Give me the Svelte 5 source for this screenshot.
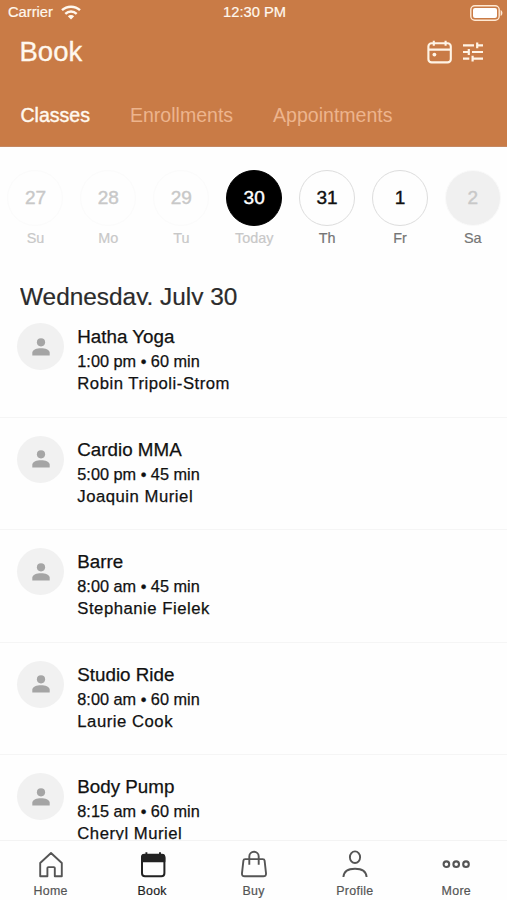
<script>
  const tabs = ['Classes', 'Enrollments', 'Appointments'];
  const days = [
    { n: 27, d: 'Su', kind: 'past' },
    { n: 28, d: 'Mo', kind: 'past' },
    { n: 29, d: 'Tu', kind: 'past' },
    { n: 30, d: 'Today', kind: 'today' },
    { n: 31, d: 'Th', kind: 'open' },
    { n: 1, d: 'Fr', kind: 'open' },
    { n: 2, d: 'Sa', kind: 'closed' },
  ];
  const classes = [
    { name: 'Hatha Yoga', time: '1:00 pm • 60 min', who: 'Robin Tripoli-Strom' },
    { name: 'Cardio MMA', time: '5:00 pm • 45 min', who: 'Joaquin Muriel' },
    { name: 'Barre', time: '8:00 am • 45 min', who: 'Stephanie Fielek' },
    { name: 'Studio Ride', time: '8:00 am • 60 min', who: 'Laurie Cook' },
    { name: 'Body Pump', time: '8:15 am • 60 min', who: 'Cheryl Muriel' },
  ];
  const nav = ['Home', 'Book', 'Buy', 'Profile', 'More'];
</script>

<div class="app">
  <header>
    <div class="status">
      <div class="carrier">
        <span>Carrier</span>
        <svg width="20" height="15" viewBox="0 0 20 15" fill="none" stroke="#fff8ee" stroke-width="2.4">
          <path d="M1 5.2C6 .5 14 .5 19 5.2M4.3 8.8c3.3-3 8.1-3 11.4 0" />
          <path d="M10 14.4 6.8 11.2c1.8-1.6 4.6-1.6 6.4 0z" fill="#fff8ee" stroke="none" />
        </svg>
      </div>
      <span class="clock">12:30 PM</span>
      <svg class="battery" width="33" height="16" viewBox="0 0 33 16">
        <rect x=".8" y=".8" width="28.4" height="14.4" rx="4" fill="none" stroke="#ffe9d3" stroke-width="1.4" />
        <rect x="3" y="3" width="24" height="10" rx="2" fill="#fff" />
        <path d="M30.6 5c2.4.8 2.4 5.2 0 6z" fill="#ffe9d3" />
      </svg>
    </div>
    <div class="title">
      <h1>Book</h1>
      <svg class="cal" width="26" height="24" viewBox="0 0 26 24" fill="none" stroke="#fff4e5" stroke-width="2.1">
        <rect x="1.4" y="3.2" width="22.4" height="19.2" rx="3.2" />
        <path d="M1.4 9.6h22.4M6.8 .8v5M18.6 .8v5" />
        <circle cx="7.4" cy="14.6" r="1.9" fill="#fff4e5" stroke="none" />
      </svg>
      <svg class="tune" width="20" height="20" viewBox="0 0 20 20" fill="none" stroke="#fff4e5" stroke-width="2.2">
        <path d="M0 3.4h11M14.2.5v5.8M14.2 3.4H20M0 10h5.8M5.8 7v6M9 10h11M0 16.6h6.3M9.6 13.7v5.8M9.6 16.6H20" />
      </svg>
    </div>
    <nav class="tabs">
      {#each tabs as t, i}<span class:on={i === 0}>{t}</span>{/each}
    </nav>
  </header>

  <section class="days">
    {#each days as day}
      <div class="day {day.kind}">
        <b>{day.n}</b>
        <span>{day.d}</span>
      </div>
    {/each}
  </section>

  <h2>Wednesday, July 30</h2>

  <main>
    {#each classes as c}
      <article>
        <div class="avatar">
          <svg width="18" height="18" viewBox="0 0 18 18" fill="#a5a5a5">
            <circle cx="9" cy="4.3" r="4.1" />
            <path d="M.3 17.4v-2.6C.3 11.7 4.9 10.3 9 10.3s8.7 1.4 8.7 4.5v2.6z" />
          </svg>
        </div>
        <div class="info">
          <div class="name">{c.name}</div>
          <div class="time">{c.time}</div>
          <div class="who">{c.who}</div>
        </div>
      </article>
    {/each}
  </main>

  <footer>
    {#each nav as item}
      <div class="item" class:active={item === 'Book'}>
        <svg width="30" height="30" viewBox="0 0 30 30" fill="none" stroke="currentColor" stroke-width="1.9" stroke-linejoin="round">
          {#if item === 'Home'}
            <path d="M4.2 26.3V13L15 3l10.8 10v13.3h-7V18.1a1 1 0 0 0-1-1h-5.4a1 1 0 0 0-1 1v8.2z" />
          {:else if item === 'Book'}
            <rect x="5" y="5" width="22.4" height="21.2" rx="3" stroke-width="2" />
            <path d="M5 11.4V7.3Q5 4.8 7.5 4.8H25q2.4 0 2.4 2.5v4.1zM9.4 2.2V6M23 2.2V6" fill="currentColor" />
          {:else if item === 'Buy'}
            <path d="M6.2 9.1h17.6q1.6 0 1.8 1.6l1.4 12.5q.3 3.1-2.7 3.1H5.7q-3 0-2.7-3.1l1.4-12.5q.2-1.6 1.8-1.6zM10.3 14.8V6.4a4.7 4.7 0 0 1 9.4 0v8.4" />
          {:else if item === 'Profile'}
            <ellipse cx="15" cy="7.2" rx="5.1" ry="5.8" />
            <path d="M3.4 27C3.8 21.3 8.6 18.7 15 18.7s11.2 2.6 11.6 8.3" />
          {:else}
            <g stroke-width="2.1"><circle cx="5.4" cy="14.2" r="2.8" /><circle cx="15.2" cy="14.2" r="2.8" /><circle cx="25" cy="14.2" r="2.8" /></g>
          {/if}
        </svg>
        <span>{item}</span>
      </div>
    {/each}
  </footer>
</div>

<style>
  :global(body) { margin: 0; background: #fefefe; }
  .app {
    width: 507px; height: 900px; overflow: hidden;
    display: flex; flex-direction: column;
    background: #fefefe; color: #111;
    font-family: "Liberation Sans", Arial, sans-serif;
  }
  header { flex: none; box-sizing: border-box; height: 147px; background: #c97b46; color: #fff8ee; border-bottom: 1px solid #c58862; }
  .status { display: grid; grid-template-columns: 1fr auto 1fr; align-items: center; height: 25px; padding: 0 4px 0 8px; font-size: 14.7px; -webkit-text-stroke: .2px; }
  .status span { margin-top: -1px; }
  .carrier { display: flex; align-items: center; gap: 8px; }
  .clock { padding-right: 2px; }
  .battery { justify-self: end; }
  .title { display: flex; align-items: center; height: 53px; padding: 0 24px 0 19.5px; }
  h1 { margin: 0; flex: 1; font-size: 27.5px; font-weight: 400; -webkit-text-stroke: .3px; }
  .tune { margin-left: 10px; }
  .tabs { display: flex; gap: 40px; padding: 25px 0 0 20.5px; font-size: 19.55px; line-height: 24px; color: #edb48d; }
  .tabs .on { color: #fff8ee; -webkit-text-stroke: .4px; }
  .days { flex: none; display: flex; justify-content: center; width: 510.3px; margin: 23px 0 0 -1px; height: 105px; }
  .day { width: 72.9px; display: flex; flex-direction: column; align-items: center; font-size: 14.4px; color: #757575; }
  b { box-sizing: border-box; width: 56px; height: 56px; border-radius: 50%; border: 1px solid #ddd; display: flex; align-items: center; justify-content: center; font-size: 19px; font-weight: 400; color: #111; -webkit-text-stroke: .4px; }
  .day span { margin-top: 4px; line-height: 17px; -webkit-text-stroke: .2px; }
  .past, .today { color: #c8c8c8; }
  .past b { color: #c8c8c8; border-color: #fbfbfb; }
  .today b { background: #000; border-color: #000; color: #fff; }
  .closed b { background: #f0f0f0; border-color: #fafafa; color: #c8c8c8; }
  h2 { flex: none; margin: 7px 0 0 20px; height: 23px; overflow: hidden; font-size: 24.4px; line-height: 29px; font-weight: 400; color: #2b2b2b; -webkit-text-stroke: .2px; }
  main { flex: 1; min-height: 0; overflow: hidden; }
  article { box-sizing: border-box; height: 112.5px; border-bottom: 1px solid #f5f5f5; display: flex; gap: 13.3px; padding: 18.4px 0 0 17px; }
  .avatar { width: 47px; height: 47px; border-radius: 50%; background: #f1f1f1; display: flex; align-items: center; justify-content: center; }
  .info { padding-top: 1px; white-space: nowrap; -webkit-text-stroke: .25px; }
  .name { font-size: 18.8px; line-height: 25px; }
  .time { font-size: 16.3px; line-height: 24px; }
  .who { font-size: 16.7px; line-height: 22px; letter-spacing: .52px; }
  footer { flex: none; box-sizing: border-box; height: 60px; border-top: 1px solid #f3f3f3; display: flex; background: #fefefe; }
  .item { flex: 1; display: flex; flex-direction: column; align-items: center; padding-top: 9px; font-size: 12.4px; letter-spacing: .3px; color: #555; }
  .item span { line-height: 16px; margin-top: 3px; -webkit-text-stroke: .2px; }
  .active { color: #222; }
</style>
